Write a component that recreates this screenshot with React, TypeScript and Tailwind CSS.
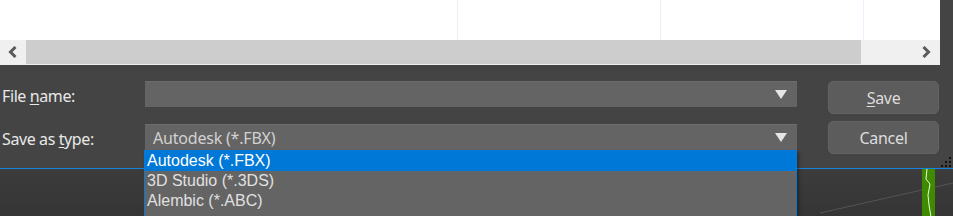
import { useState } from "react";

const TYPES = ["Autodesk (*.FBX)", "3D Studio (*.3DS)", "Alembic (*.ABC)"];

const ui = { fontFamily: '"Noto Sans", "Open Sans", sans-serif' };
const list = { fontFamily: '"Liberation Sans", Arial, sans-serif' };

function Caret() {
  return (
    <svg width="12" height="9" viewBox="0 0 12 9" className="shrink-0">
      <path d="M0 0 H12 L6 9 Z" fill="#e6e6e6" />
    </svg>
  );
}

function Field({ value, children }: { value?: string; children?: React.ReactNode }) {
  return (
    <div className="relative h-[26px] w-[652px] bg-[#646464] border-t border-[#6c6c6c] flex items-center pl-[8px] pr-[10px]">
      <span className="flex-1 text-[16px] tracking-[-0.2px] text-[#d2d2d2] leading-none" style={ui}>
        {value}
      </span>
      <Caret />
      {children}
    </div>
  );
}

function Button({ children }: { children: React.ReactNode }) {
  return (
    <div
      className="h-[33px] w-[111px] rounded-[5px] bg-[#5c5c5c] border border-[#626262] flex items-center justify-center text-[16px] tracking-[-0.3px] text-[#dcdcdc]"
      style={ui}
    >
      {children}
    </div>
  );
}

export default function App() {
  const [sel] = useState(0);
  return (
    <div className="w-[953px] h-[216px] overflow-hidden bg-[#444444] flex flex-col">
      {/* file list + horizontal scrollbar */}
      <div className="flex h-[65px] shrink-0">
        <div className="w-[940px] flex flex-col bg-white">
          <div className="h-[40px] flex">
            <div className="w-[458px] border-r border-[#e8f0fb]" />
            <div className="w-[203px] border-r border-[#e8f0fb]" />
            <div className="w-[203px] border-r border-[#e8f0fb]" />
          </div>
          <div className="h-[24px] flex bg-[#f0f0f0]">
            <div className="w-[26px] flex items-center justify-center">
              <svg width="10" height="12" viewBox="0 0 10 12">
                <path d="M7.5 1 L2.5 6 L7.5 11" stroke="#5a5a5a" strokeWidth="3" fill="none" />
              </svg>
            </div>
            <div className="w-[835px] bg-[#cdcdcd]" />
            <div className="flex-1 flex items-center justify-end pr-[9px]">
              <svg width="10" height="12" viewBox="0 0 10 12">
                <path d="M2.5 1 L7.5 6 L2.5 11" stroke="#5a5a5a" strokeWidth="3" fill="none" />
              </svg>
            </div>
          </div>
          <div className="h-[1px] bg-[#f0f0f0]" />
        </div>
        <div className="flex-1 bg-[#444444]" />
      </div>

      {/* form */}
      <div className="relative h-[103px] shrink-0 flex pt-[16px]">
        <div className="flex flex-col gap-[17px]">
          <div className="h-[26px] flex items-center">
            <span className="w-[145px] pl-[2px] pt-[4px] text-[16px] leading-[22px] tracking-[-0.4px] text-[#e8e8e8]" style={ui}>
              File <u className="underline-offset-2">n</u>ame:
            </span>
            <Field />
          </div>
          <div className="h-[26px] flex items-center">
            <span className="w-[145px] pl-[2px] pt-[3px] text-[16px] leading-[22px] tracking-[-0.4px] text-[#e8e8e8]" style={ui}>
              Save as <u className="underline-offset-2">t</u>ype:
            </span>
            <Field value={TYPES[sel]}>
              <div className="absolute left-[-1px] top-[25px] w-[653px] z-10 border border-[#0a78d7] border-b-0 bg-[#646464] shadow-[2px_2px_3px_rgba(0,0,0,0.35)]">
                {TYPES.map((t, i) => (
                  <div
                    key={t}
                    className={
                      "h-[20px] pl-[2px] flex items-center text-[16px] leading-none " +
                      (i === sel ? "bg-[#0078d7] text-white" : "text-[#e0e0e0]")
                    }
                    style={list}
                  >
                    {t}
                  </div>
                ))}
                <div className="h-[6px]" />
              </div>
            </Field>
          </div>
        </div>
        <div className="ml-[31px] flex flex-col gap-[7px]">
          <Button>
            <u className="underline-offset-2">S</u>ave
          </Button>
          <Button>Cancel</Button>
        </div>
        {/* resize grip */}
        <svg width="12" height="10" viewBox="0 0 12 10" className="absolute right-0 bottom-[1px]">
          <rect x="8" y="0" width="2" height="2" fill="#111" />
          <rect x="4" y="4" width="2" height="2" fill="#111" />
          <rect x="8" y="4" width="2" height="2" fill="#111" />
          <rect x="0" y="8" width="2" height="2" fill="#111" />
          <rect x="4" y="8" width="2" height="2" fill="#111" />
          <rect x="8" y="8" width="2" height="2" fill="#111" />
        </svg>
      </div>

      {/* viewport below */}
      <div className="relative flex-1 border-t border-[#1683df] bg-gradient-to-b from-[#3c3c3c] to-[#353535]">
        <svg width="953" height="48" viewBox="0 0 953 48" className="absolute left-0 top-0">
          <line x1="820" y1="44" x2="953" y2="14" stroke="#555" strokeWidth="1" />
          <path d="M922 0 H935 V48 H922 Z" fill="#3f8a00" />
          <path d="M927 0 L926 10 L930 15 L928 26 L929 36 L931 48" stroke="#e8ffd8" strokeWidth="1" fill="none" />
        </svg>
      </div>
    </div>
  );
}
